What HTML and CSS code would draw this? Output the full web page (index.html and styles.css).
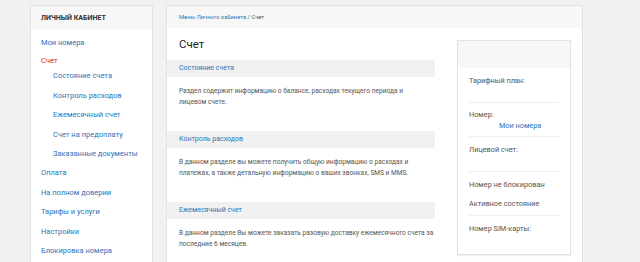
FILE: index.html
```html
<!DOCTYPE html>
<html lang="ru">
<head>
<meta charset="utf-8">
<title>Счет</title>
<link rel="stylesheet" href="styles.css">
</head>
<body>
<div class="page">
  <aside class="sidebar">
    <div class="sidebar-head">Личный кабинет</div>
    <ul class="menu">
      <li><a class="link">Мои номера</a></li>
      <li><a class="link active">Счет</a>
        <ul class="submenu">
          <li><a class="link">Состояние счета</a></li>
          <li><a class="link">Контроль расходов</a></li>
          <li><a class="link">Ежемесячный счет</a></li>
          <li><a class="link">Счет на предоплату</a></li>
          <li><a class="link">Заказанные документы</a></li>
        </ul>
      </li>
      <li><a class="link">Оплата</a></li>
      <li><a class="link">На полном доверии</a></li>
      <li><a class="link">Тарифы и услуги</a></li>
      <li><a class="link">Настройки</a></li>
      <li><a class="link">Блокировка номера</a></li>
    </ul>
  </aside>
  <main class="main">
    <div class="crumbs"><a class="crumb-link">Меню Личного кабинета</a> / Счет</div>
    <div class="main-body">
      <div class="content">
        <h1 class="title">Счет</h1>
        <section class="section">
          <h2 class="section-head">Состояние счета</h2>
          <p class="section-text narrow">Раздел содержит информацию о балансе, расходах текущего периода и лицевом счете.</p>
        </section>
        <section class="section">
          <h2 class="section-head">Контроль расходов</h2>
          <p class="section-text">В данном разделе вы можете получить общую информацию о расходах и платежах, а также детальную информацию о ваших звонках, SMS и MMS.</p>
        </section>
        <section class="section">
          <h2 class="section-head">Ежемесячный счет</h2>
          <p class="section-text">В данном разделе Вы можете заказать разовую доставку ежемесячного счета за последние 6 месяцев.</p>
        </section>
      </div>
      <div class="card">
        <div class="card-head"></div>
        <div class="card-row row-tall">Тарифный план:</div>
        <div class="card-row row-number">Номер:<a class="card-link">Мои номера</a></div>
        <div class="card-row row-tall">Лицевой счет:</div>
        <div class="card-row row-status"><span>Номер не блокирован</span><span>Активное состояние</span></div>
        <div class="card-row row-last">Номер SIM-карты:</div>
      </div>
    </div>
  </main>
</div>
</body>
</html>
```
FILE: styles.css
```css
html, body {
  margin: 0;
  padding: 0;
}
body {
  background: #f1f1f1;
  font-family: Roboto, "Liberation Sans", sans-serif;
  color: #555;
  overflow: hidden;
  height: 262px;
}
.page {
  display: flex;
  align-items: stretch;
  gap: 13px;
  padding: 5px 0 0 30px;
  height: 257px;
}
.sidebar {
  width: 121px;
  background: #fff;
  border: 1px solid #e3e3e3;
  border-bottom: none;
}
.sidebar-head {
  height: 23px;
  line-height: 23px;
  background: #f7f7f7;
  padding-left: 10px;
  font-size: 7.1px;
  font-weight: bold;
  text-transform: uppercase;
  color: #333;
}
.menu, .submenu {
  list-style: none;
  margin: 0;
  padding: 0;
}
.menu {
  padding-top: 4px;
}
.menu li {
  line-height: 19.4px;
  font-size: 7.5px;
}
.link {
  display: block;
  padding-left: 10px;
  color: #2a74b8;
}
.link.active {
  color: #e4202a;
  line-height: 17px;
}
.submenu {
  margin-top: -3px;
}
.submenu .link {
  padding-left: 22px;
}
.main {
  width: 415px;
  background: #fff;
  border: 1px solid #e3e3e3;
  border-bottom: none;
}
.crumbs {
  height: 22px;
  line-height: 22px;
  background: #f7f7f7;
  padding-left: 12px;
  font-size: 5.8px;
  color: #555;
}
.crumb-link {
  color: #2a74b8;
}
.main-body {
  display: flex;
  align-items: flex-start;
}
.content {
  width: 268px;
}
.title {
  margin: 8px 0 8px;
  padding-left: 12px;
  font-size: 11.5px;
  line-height: 16px;
  font-weight: normal;
  color: #222;
}
.section-head {
  margin: 0;
  height: 17px;
  line-height: 17px;
  background: #f1f1f1;
  padding-left: 12px;
  font-size: 7px;
  font-weight: normal;
  color: #2a74b8;
}
.section-text {
  margin: 0;
  padding: 9px 0 23px 12px;
  font-size: 6.6px;
  line-height: 11px;
  color: #555;
}
.section-text.narrow {
  padding-right: 24px;
}
.card {
  margin: 12px 0 0 22px;
  width: 112px;
  height: 213px;
  border: 1px solid #e3e3e3;
  box-shadow: 0 1px 1px rgba(0,0,0,0.06);
  background: #fff;
  font-size: 7.3px;
  line-height: 11px;
  color: #555;
}
.card-head {
  height: 27px;
  background: #f7f7f7;
}
.card-row {
  margin: 0 11px;
  border-bottom: 1px solid #eeeeee;
}
.row-tall {
  padding: 7px 0 16px;
}
.row-number {
  padding: 6px 0 5px;
}
.card-link {
  display: block;
  padding-left: 30px;
  color: #2a74b8;
}
.row-status {
  display: flex;
  flex-direction: column;
  gap: 8px;
  padding: 7px 0 6px;
}
.row-last {
  border-bottom: none;
  padding: 7px 0 0;
}
```
